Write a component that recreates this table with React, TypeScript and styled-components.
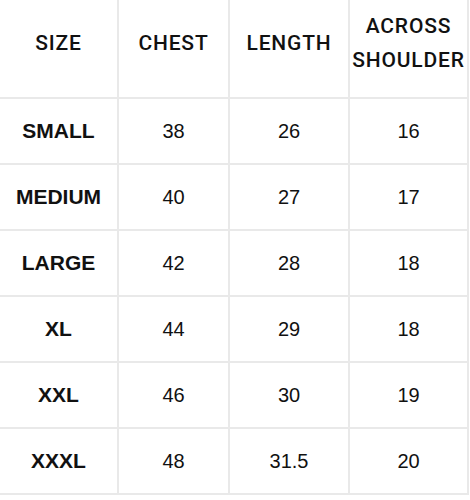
import React from "react";
import styled, { createGlobalStyle } from "styled-components";

const Global = createGlobalStyle`
  html, body { margin: 0; padding: 0; background: #ffffff; }
  body { font-family: "Liberation Sans", Arial, sans-serif; }
`;

const Table = styled.div`
  display: grid;
  grid-template-columns: 117px 109px 118px 117px;
  grid-template-rows: 97px repeat(6, 64px);
  gap: 2px;
  padding: 0 2px 2px 0;
  width: max-content;
  background: #e9e9e9;
`;

const HeadCell = styled.div`
  background: #ffffff;
  display: flex;
  align-items: center;
  justify-content: center;
  text-align: center;
  padding-bottom: 11px;
  box-sizing: border-box;
  font-family: Roboto, "Liberation Sans", sans-serif;
  font-weight: 500;
  font-size: 21px;
  letter-spacing: 0.8px;
  line-height: 34px;
  color: #111111;
`;

const Cell = styled.div<{ $label?: boolean }>`
  background: #ffffff;
  display: flex;
  align-items: center;
  justify-content: center;
  font-family: "Liberation Sans", Arial, sans-serif;
  font-size: ${(p) => (p.$label ? "21px" : "20px")};
  font-weight: ${(p) => (p.$label ? 700 : 400)};
  color: #111111;
`;

const headers = ["SIZE", "CHEST", "LENGTH", "ACROSS\nSHOULDER"];
const rows: string[][] = [
  ["SMALL", "38", "26", "16"],
  ["MEDIUM", "40", "27", "17"],
  ["LARGE", "42", "28", "18"],
  ["XL", "44", "29", "18"],
  ["XXL", "46", "30", "19"],
  ["XXXL", "48", "31.5", "20"],
];

export default function App() {
  return (
    <>
      <Global />
      <Table>
        {headers.map((h) => (
          <HeadCell key={h}>
            <span>
              {h.split("\n").map((line, i) => (
                <React.Fragment key={line}>
                  {i > 0 && <br />}
                  {line}
                </React.Fragment>
              ))}
            </span>
          </HeadCell>
        ))}
        {rows.map((r) =>
          r.map((v, i) => (
            <Cell key={r[0] + i} $label={i === 0}>
              {v}
            </Cell>
          ))
        )}
      </Table>
    </>
  );
}
